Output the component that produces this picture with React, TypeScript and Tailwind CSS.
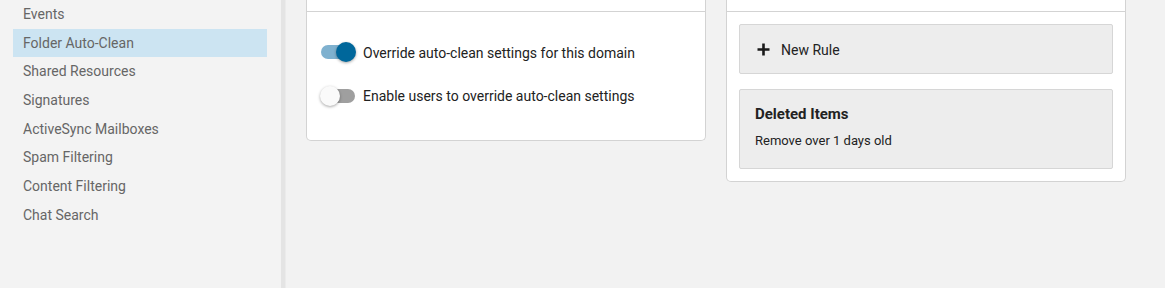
import React from "react";

const items = [
  "Events",
  "Folder Auto-Clean",
  "Shared Resources",
  "Signatures",
  "ActiveSync Mailboxes",
  "Spam Filtering",
  "Content Filtering",
  "Chat Search",
];

function Toggle({ on }: { on: boolean }) {
  return (
    <div className="relative w-[36px] h-[20px] shrink-0">
      <div
        className={
          "absolute left-[1px] top-[3px] w-[34px] h-[14px] rounded-full " +
          (on ? "bg-[#7fb1cf]" : "bg-[#9f9f9f]")
        }
      />
      <div
        className={
          "absolute top-0 w-[20px] h-[20px] rounded-full shadow-[0_1px_3px_rgba(0,0,0,0.35)] " +
          (on ? "left-[16px] bg-[#00679b]" : "left-0 bg-[#fafafa]")
        }
      />
    </div>
  );
}

export default function App() {
  return (
    <div
      className="flex w-[1165px] h-[288px] overflow-hidden bg-[#f2f2f2]"
      style={{ fontFamily: "Roboto, 'Liberation Sans', sans-serif" }}
    >
      <div className="w-[281px] shrink-0 bg-[#f3f3f3] pl-[13px] pr-[14px]">
        <div className="mt-0 flex flex-col">
          {items.map((t, i) => (
            <div
              key={t}
              className={
                "h-[28.7px] flex items-center pl-[10px] text-[14px] text-[#666666] " +
                (i === 1 ? "bg-[#cce4f2]" : "")
              }
            >
              {t}
            </div>
          ))}
        </div>
      </div>
      <div className="w-[4px] shrink-0 bg-[#e4e4e4]" />
      <div className="w-[1px] shrink-0 bg-[#ebebeb]" />
      <div className="flex-1 flex items-start gap-[20px] pl-[20px]">
        <div className="w-[400px] bg-white border border-t-0 border-[#d3d3d3] rounded-b-[5px] h-[141px]">
          <div className="h-[12px] border-b border-[#d3d3d3]" />
          <div className="pl-[13px] pt-[30px] flex flex-col gap-[24px]">
            <div className="flex items-center gap-[7px] h-[20px]">
              <Toggle on />
              <span className="text-[14px] text-[#222222] leading-[20px] pt-[2px]">
                Override auto-clean settings for this domain
              </span>
            </div>
            <div className="flex items-center gap-[7px] h-[20px]">
              <Toggle on={false} />
              <span className="text-[14px] text-[#222222] leading-[20px]">
                Enable users to override auto-clean settings
              </span>
            </div>
          </div>
        </div>
        <div className="w-[400px] bg-white border border-t-0 border-[#d3d3d3] rounded-b-[5px] h-[182px]">
          <div className="h-[12px] border-b border-[#d3d3d3]" />
          <div className="px-[12px] pt-[12px] flex flex-col gap-[15px]">
            <div className="h-[50px] bg-[#ededed] border border-[#d6d6d6] rounded-[2px] flex items-center pl-[17px] pt-[1px]">
              <svg width="13" height="13" viewBox="0 0 13 13" className="mr-[11px]">
                <path d="M6.5 0.5 V12.5 M0.5 6.5 H12.5" stroke="#1a1a1a" strokeWidth="2.6" />
              </svg>
              <span className="text-[14px] text-[#222222] pt-[1px]">New Rule</span>
            </div>
            <div className="h-[80px] bg-[#ededed] border border-[#d6d6d6] rounded-[2px] px-[15px] pt-[14px]">
              <div className="text-[15px] font-bold text-[#222222] leading-[20px]">Deleted Items</div>
              <div className="text-[13px] text-[#222222] mt-[8px] leading-[18px]">
                Remove over 1 days old
              </div>
            </div>
          </div>
        </div>
      </div>
    </div>
  );
}
